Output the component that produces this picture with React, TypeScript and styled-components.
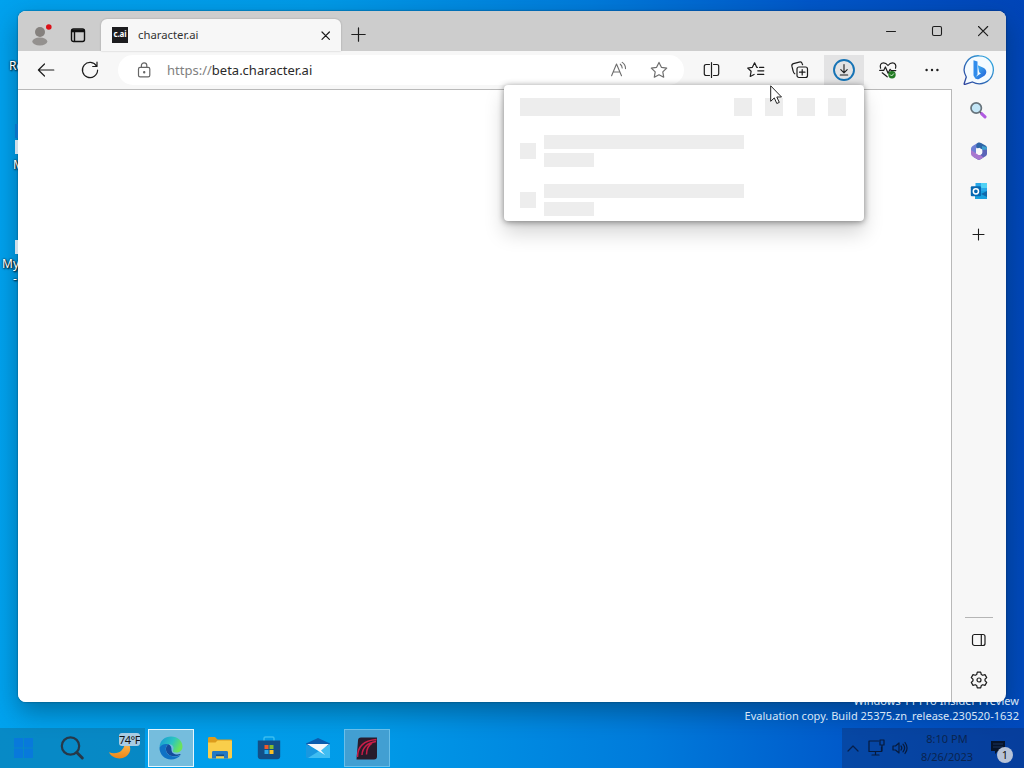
import React from "react";
import styled, { createGlobalStyle } from "styled-components";

const GlobalStyle = createGlobalStyle`
  * {
    box-sizing: border-box;
  }

  body {
    margin: 0;
    overflow: hidden;
    font-family: "Noto Sans", "Open Sans", sans-serif;
    cursor: default;
  }

  svg {
    display: block;
    flex: none;
    overflow: visible;
  }
`;

const StyledDesktop = styled.div`
  position: relative;
  width: 1024px;
  height: 768px;
  overflow: hidden;
  display: flex;
  flex-direction: column;
  justify-content: flex-end;
  background: linear-gradient(86deg, #00a3ef 0%, #009be8 34%, #007bdb 60%, #0057c9 80%, #0045b8 100%);
`;

const StyledShortcut = styled.div<{ $left: number; $top: number }>`
  position: absolute;
  left: ${(p) => p.$left}px;
  top: ${(p) => p.$top}px;
  font-size: 12px;
  line-height: 14px;
  white-space: pre;
  color: #fff;
  text-shadow: 1px 1px 2px #000, 0 0 2px #000;
`;

const StyledShortcutIcon = styled.div<{ $top: number; $color: string }>`
  position: absolute;
  left: 15px;
  top: ${(p) => p.$top}px;
  width: 30px;
  height: 14px;
  background: ${(p) => p.$color};
`;

const StyledWatermark = styled.div`
  position: relative;
  padding-right: 5px;
  margin-bottom: 5px;
  text-align: right;
  font-size: 11px;
  line-height: 15px;
  letter-spacing: 0.02px;
  color: #d9e6f5;
`;

const StyledWindow = styled.div`
  position: absolute;
  left: 18px;
  top: 11px;
  width: 988px;
  height: 691px;
  display: flex;
  flex-direction: column;
  overflow: hidden;
  border-radius: 8px;
  background: #f7f7f7;
`;

const StyledWindowShadow = styled.div`
  position: absolute;
  left: 18px;
  top: 11px;
  width: 988px;
  height: 691px;
  border-radius: 8px;
  box-shadow: 0 10px 26px rgba(0, 40, 60, 0.42), 0 0 2px rgba(0, 0, 0, 0.5);
`;

const StyledTitleBar = styled.header`
  height: 40px;
  flex: none;
  display: flex;
  padding-left: 2px;
  background: #cdcdcd;
`;

const StyledTitleButton = styled.div<{ $width: number }>`
  width: ${(p) => p.$width}px;
  height: 40px;
  display: flex;
  align-items: center;
  justify-content: center;
`;

const StyledProfile = styled(StyledTitleButton)`
  padding-top: 8px;
`;

const StyledTabActions = styled(StyledTitleButton)`
  padding: 7px 5px 0 0;
`;

const StyledTab = styled.div`
  width: 240px;
  height: 32px;
  margin-top: 8px;
  padding: 0 10px 0 11px;
  display: flex;
  align-items: center;
  border-radius: 6px 6px 0 0;
  background: #f7f7f7;
  box-shadow: 0 0 2px rgba(0, 0, 0, 0.25);
`;

const StyledNewTab = styled(StyledTitleButton)`
  padding-top: 7px;
`;

const StyledFavicon = styled.div`
  width: 16px;
  height: 16px;
  background: #1c1c1f;
  color: #fff;
  font-size: 8px;
  font-weight: 700;
  line-height: 14px;
  letter-spacing: -0.2px;
  text-align: center;
`;

const StyledTabTitle = styled.span`
  flex: 1;
  padding-left: 10px;
  font-size: 11.3px;
  line-height: 16px;
  color: #333;
`;

const StyledControls = styled.div`
  display: flex;
  margin-left: auto;
`;

const StyledBody = styled.div`
  flex: 1;
  min-height: 0;
  display: flex;
`;

const StyledMain = styled.main`
  width: 934px;
  display: flex;
  flex-direction: column;
`;

const StyledToolbar = styled.div`
  height: 39px;
  flex: none;
  display: flex;
  align-items: flex-start;
  gap: 4px;
  padding: 4px 0 0 8px;
  border-bottom: 1px solid #b9b9b9;
`;

const StyledToolButton = styled.div<{ $active?: boolean }>`
  width: 40px;
  height: 30px;
  flex: none;
  display: flex;
  align-items: center;
  justify-content: center;
  background: ${(p) => (p.$active ? "#e3e3e4" : "transparent")};
`;

const StyledAddress = styled.div`
  width: 566px;
  height: 30px;
  margin: 0 4px;
  padding: 0 16px 0 18px;
  display: flex;
  align-items: center;
  border-radius: 15px;
  background: #fff;
`;

const StyledUrl = styled.span`
  flex: 1;
  padding-left: 15px;
  font-size: 13px;
  line-height: 18px;
  color: #2a2a2a;

  em {
    font-style: normal;
    color: #808080;
  }
`;

const StyledAddressIcons = styled.div`
  display: flex;
  align-items: center;
  gap: 22px;
`;

const StyledPage = styled.div`
  flex: 1;
  border-right: 1px solid #b9b9b9;
  background: #fff;
`;

const StyledSidebar = styled.aside`
  flex: 1;
  display: flex;
  flex-direction: column;
  align-items: center;
  padding-bottom: 2px;
`;

const StyledSideItem = styled.div<{ $height?: number }>`
  height: ${(p) => p.$height || 40}px;
  display: flex;
  align-items: center;
  justify-content: center;
`;

const StyledDivider = styled.div`
  width: 28px;
  height: 1px;
  margin: auto 0 2px;
  background: #b5b5b5;
`;

const StyledPopup = styled.section`
  position: absolute;
  left: 486px;
  top: 74px;
  width: 360px;
  height: 136px;
  padding: 13px 18px 0 16px;
  border-radius: 4px;
  background: #fff;
  box-shadow: 0 12px 20px rgba(0, 0, 0, 0.17), 0 1px 6px rgba(0, 0, 0, 0.45);
`;

const StyledPopupHead = styled.div`
  display: flex;
  justify-content: space-between;
  margin-bottom: 19px;
`;

const StyledPopupActions = styled.div`
  display: flex;
  gap: 13.3px;
`;

const StyledPopupRow = styled.div`
  display: flex;
  align-items: center;
  gap: 8px;
  margin-bottom: 17px;
`;

const StyledLines = styled.div`
  display: flex;
  flex-direction: column;
  gap: 4px;
`;

const StyledBone = styled.div<{ $width: number; $height: number }>`
  width: ${(p) => p.$width}px;
  height: ${(p) => p.$height}px;
  background: #ededed;
`;

const StyledCursor = styled.div`
  position: absolute;
  left: 770px;
  top: 85px;
`;

const StyledTaskbar = styled.footer`
  position: relative;
  height: 40px;
  display: flex;
  justify-content: space-between;
`;

const StyledPinned = styled.div`
  display: flex;
`;

const StyledTaskGroup = styled.div<{ $tinted?: boolean }>`
  display: flex;
  align-items: center;
  gap: 3px;
  padding-left: ${(p) => (p.$tinted ? 0 : 3)}px;
  padding-right: ${(p) => (p.$tinted ? 1 : 0)}px;
  background: ${(p) => (p.$tinted ? "rgba(20, 90, 120, 0.34)" : "transparent")};
`;

const StyledTask = styled.div<{ $state?: "active" | "open" }>`
  position: relative;
  width: 46px;
  height: 38px;
  display: flex;
  align-items: center;
  justify-content: center;
  border: ${(p) => (p.$state ? "1px solid" : "none")};
  border-color: ${(p) => (p.$state === "active" ? "#e6f6fd" : "#69bfea")};
  background: ${(p) =>
    p.$state === "active" ? "#75bddd" : p.$state === "open" ? "#429fd2" : "transparent"};
`;

const StyledTemp = styled.span`
  position: absolute;
  left: 21px;
  top: 4px;
  width: 21px;
  height: 13px;
  border-radius: 3px;
  background: #a9cce3;
  color: #111;
  font-size: 11px;
  line-height: 13px;
  letter-spacing: -0.5px;
  white-space: nowrap;
  overflow: hidden;
`;

const StyledTray = styled.div`
  width: 182px;
  display: flex;
  align-items: center;
  padding-left: 5px;
  background: rgba(15, 45, 105, 0.38);
`;

const StyledTrayIcons = styled.div`
  display: flex;
  align-items: center;
  gap: 8px;
`;

const StyledClock = styled.div`
  width: 62px;
  margin-left: 7px;
  text-align: center;
  font-size: 11px;
  line-height: 18px;
  color: #0a2450;
`;

const StyledNotice = styled.div`
  position: relative;
  margin-left: 12px;
`;

const StyledBadge = styled.span`
  position: absolute;
  left: 7px;
  top: 7px;
  width: 16px;
  height: 16px;
  border-radius: 50%;
  background: #b7c3d8;
  color: #111;
  font-size: 11px;
  line-height: 16px;
  text-align: center;
`;

function Icon({
  size = 18,
  color = "#1d1d1d",
  width = 1.2,
  children,
}: {
  size?: number;
  color?: string;
  width?: number;
  children: React.ReactNode;
}) {
  return (
    <svg
      width={size}
      height={size}
      viewBox={`0 0 ${size} ${size}`}
      fill="none"
      stroke={color}
      strokeWidth={width}
      strokeLinecap="round"
      strokeLinejoin="round"
    >
      {children}
    </svg>
  );
}

function TitleBar() {
  return (
    <StyledTitleBar>
      <StyledProfile $width={39}>
        <svg width="22" height="24" viewBox="0 0 22 24">
          <circle cx="11" cy="9" r="5" fill="#85817e" />
          <ellipse cx="10.8" cy="18.5" rx="7.5" ry="4" fill="#94918f" />
          <circle cx="19.8" cy="4" r="2.8" fill="#dc1018" />
        </svg>
      </StyledProfile>
      <StyledTabActions $width={42}>
        <Icon size={16} width={1.4} color="#111">
          <rect x="1.5" y="2" width="13" height="12.5" rx="2" />
          <path d="M2 3.2h12M2 4.6h12M4.5 5v9" />
        </Icon>
      </StyledTabActions>
      <StyledTab>
        <StyledFavicon>c.ai</StyledFavicon>
        <StyledTabTitle>character.ai</StyledTabTitle>
        <Icon size={11}>
          <path d="M2 2l7.400 7.400M9.400 2L2 9.400" />
        </Icon>
      </StyledTab>
      <StyledNewTab $width={35}>
        <Icon size={15}>
          <path d="M7.500.8v13.400M.8 7.500h13.400" />
        </Icon>
      </StyledNewTab>
      <StyledControls>
        <StyledTitleButton $width={46}>
          <Icon size={10} width={1}>
            <path d="M.5 5.500h9" />
          </Icon>
        </StyledTitleButton>
        <StyledTitleButton $width={46}>
          <Icon size={10} width={1.1}>
            <rect x=".5" y=".5" width="9" height="9" rx="1.5" />
          </Icon>
        </StyledTitleButton>
        <StyledTitleButton $width={46}>
          <Icon size={10} width={1.1}>
            <path d="M.5.5l9.200 9.200M9.700.5L.5 9.700" />
          </Icon>
        </StyledTitleButton>
      </StyledControls>
    </StyledTitleBar>
  );
}

function Toolbar() {
  return (
    <StyledToolbar>
      <StyledToolButton>
        <Icon>
          <path d="M16.8 9H1.500M7.500 3L1.400 9l6.100 6" />
        </Icon>
      </StyledToolButton>
      <StyledToolButton>
        <Icon>
          <path d="M15.600 5.200A7.600 7.600 0 1 0 16.600 9M16 1.200v4.300h-4.300" />
        </Icon>
      </StyledToolButton>
      <StyledAddress>
        <Icon size={16} color="#666">
          <rect x="2.500" y="5.300" width="11.300" height="9.600" rx="1.600" />
          <path d="M5.400 5.200V3.600a2.700 2.700 0 0 1 5.400 0v1.600" />
          <circle cx="8.200" cy="10.200" r=".6" fill="#666" />
        </Icon>
        <StyledUrl>
          <em>https://</em>beta.character.ai
        </StyledUrl>
        <StyledAddressIcons>
          <Icon color="#6e6e6e" width={1.1}>
            <path d="M1.600 14.800L6.500 3l5 11.800M3.300 11h6.500M10.300 3.200c1.200.9 1.800 2.100 1.900 3.800M12.200 1.400c2 1.300 3.300 3.500 3.300 6.200" />
          </Icon>
          <Icon color="#6e6e6e">
            <path d="M9 1.400l2.400 4.900 5.300.8-3.900 3.800.9 5.300L9 13.700l-4.700 2.500.9-5.300-3.900-3.800 5.300-.8z" />
          </Icon>
        </StyledAddressIcons>
      </StyledAddress>
      <StyledToolButton>
        <Icon>
          <path d="M6.500 3.500H3A1.700 1.700 0 0 0 1.300 5.200v7.600A1.700 1.700 0 0 0 3 14.500h3.500M10.500 3.500H14a1.700 1.700 0 0 1 1.700 1.700v7.600a1.700 1.700 0 0 1-1.700 1.700h-3.500M8.500 1.500v15" />
        </Icon>
      </StyledToolButton>
      <StyledToolButton>
        <Icon>
          <path d="M10.500 6.300H9.700L7.600 1.800 5.400 6.300l-4.700.7 3.400 3.300-.9 5.200 3.900-2M16.800 6.300h-4.300M16.800 9.800h-6M16.800 13.300h-6.300" />
        </Icon>
      </StyledToolButton>
      <StyledToolButton>
        <Icon>
          <rect x="6" y="6" width="10.500" height="10.500" rx="2" />
          <path d="M11.200 8.500v5.500M8.500 11.200H14M3.800 12.800C2.600 12.300 2.400 11.500 2.100 10L.9 5.200C.6 3.800 1 3 2.400 2.600l5.800-1.500c1.600-.4 2.600.2 3 1.600l.4 1" />
        </Icon>
      </StyledToolButton>
      <StyledToolButton $active>
        <Icon size={22} width={1.1}>
          <circle cx="11" cy="11" r="10" stroke="#1673b5" strokeWidth="1.900" />
          <path d="M11 5.500v8.200M7.800 10.700l3.200 3.200 3.200-3.200M7.300 16h7.400" />
        </Icon>
      </StyledToolButton>
      <StyledToolButton>
        <Icon width={1.2}>
          <path d="M1.600 7.200C.5 3.800 2.200 1.800 4.500 1.800c2 0 3.200 1 4.500 2.700 1.300-1.700 2.600-2.700 4.500-2.700 2.500 0 4.100 2.400 3 5.400M.7 9.400h4L6.400 6l2.700 6.300 2-4 1.200 1.300h4.500M3.200 11.800l5 4" />
          <circle cx="13" cy="13.800" r="3.700" fill="#237b24" stroke="none" />
          <path d="M11.400 13.800l1.200 1.200 2-2.200" stroke="#d6f0d5" strokeWidth="1" />
        </Icon>
      </StyledToolButton>
      <StyledToolButton>
        <svg width="16" height="16" viewBox="0 0 16 16" fill="#1d1d1d">
          <circle cx="2.600" cy="8" r="1.200" />
          <circle cx="8" cy="8" r="1.200" />
          <circle cx="13.400" cy="8" r="1.200" />
        </svg>
      </StyledToolButton>
    </StyledToolbar>
  );
}

function BingIcon() {
  return (
    <svg width="32" height="32" viewBox="0 0 32 32">
      <defs>
        <linearGradient id="bingRing" x1="1" y1="0" x2="0" y2="1">
          <stop offset="0" stopColor="#35b4e8" />
          <stop offset="1" stopColor="#2b3f9a" />
        </linearGradient>
        <linearGradient id="bingB" x1="0" y1="0" x2="1" y2="1">
          <stop offset="0" stopColor="#45bdf3" />
          <stop offset="1" stopColor="#1f5bd8" />
        </linearGradient>
      </defs>
      <path
        d="M16.500.8A14 14 0 1 1 9.500 27L2 29.400c-.7.2-1-.3-.8-.9l2.100-6.500A14 14 0 0 1 16.500.8z"
        fill="#f4fbff"
        stroke="url(#bingRing)"
        strokeWidth="1.300"
      />
      <path d="M10.500 5.200l4 1.400v13l-2 3c-1.200-.4-2-1.400-2-2.600z" fill="#2f8cec" />
      <path d="M14.800 10.300l5.600 2.400c3.600 1.700 3.800 5.700 1 8l-5.100 3.100c-1.900 1.100-4 .2-4.800-1.200l6.400-4-1.700-1.300z" fill="url(#bingB)" />
    </svg>
  );
}

function Sidebar() {
  return (
    <StyledSidebar>
      <StyledSideItem>
        <BingIcon />
      </StyledSideItem>
      <StyledSideItem>
        <svg width="18" height="18" viewBox="0 0 18 18">
          <path d="M10 10l2 2" stroke="#555" strokeWidth="2" />
          <path d="M11.800 11.800l3.200 3" stroke="#b05ae0" strokeWidth="3.200" strokeLinecap="round" />
          <circle cx="6.200" cy="6" r="5.200" fill="#c3e6f7" stroke="#67737b" strokeWidth="1.700" />
        </svg>
      </StyledSideItem>
      <StyledSideItem>
        <svg width="18" height="18" viewBox="0 0 18 18">
          <path d="M8 .8L3 3.700C1.500 4.600 1 5.800 1 7.200v4.500L6 11V7.500c0-1 .4-1.800 1.300-2.300L12 2z" fill="#6f80d6" />
          <path d="M8 .8c1.200-.6 2-.5 3 .1l4.500 2.700c1 .6 1.500 1.700 1.500 3v4.500l-4.800-3.200-5.400-1.900C5.800 4 6 1.800 8 .8z" fill="#2f66a7" />
          <path d="M12 4l4.500 1c.4.500.5 1 .5 1.600v4.500l-4.800-3.200z" fill="#3fa0cf" />
          <path d="M17 7.500v4c0 1.300-.4 2.100-1.500 2.800l-4.800 2.900c-1.200.7-2.300.7-3.500 0L3 14.700l7.200-1.600c1.400-.6 2-1.400 2-3V8z" fill="#5a63b8" />
          <path d="M1 8v3.800c0 1.200.6 2.100 1.700 2.800l4.300 2.500c1.200.7 2.500.7 3.700 0l2.800-1.700-3-2.400H8.600L5.600 11z" fill="#a877cf" />
          <path d="M9.200 5.800l3 1.800v3.600L9.200 13l-3.200-1.900V7.600z" fill="#f8f8fb" />
        </svg>
      </StyledSideItem>
      <StyledSideItem>
        <svg width="18" height="18" viewBox="0 0 18 18">
          <rect x="5.500" y="1" width="11.500" height="11" fill="#29a8e8" />
          <rect x="11" y="1" width="6" height="5" fill="#50d2f5" />
          <path d="M5 9h12v8H5z" fill="#1aa0dd" />
          <path d="M17 9v6l-6-3z" fill="#1169ab" />
          <rect x=".8" y="4.300" width="10.200" height="10" rx="1" fill="#0868b1" />
          <circle cx="5.900" cy="9.300" r="2.600" fill="none" stroke="#fff" strokeWidth="1.500" />
        </svg>
      </StyledSideItem>
      <StyledSideItem $height={47}>
        <Icon size={12} width={1.1}>
          <path d="M5.500 0v11M0 5.500h11" />
        </Icon>
      </StyledSideItem>
      <StyledDivider />
      <StyledSideItem>
        <Icon size={16} width={1.2}>
          <rect x="1.500" y="2.500" width="12.500" height="11" rx="2" />
          <path d="M10.300 2.500v11" />
        </Icon>
      </StyledSideItem>
      <StyledSideItem>
        <Icon width={1.2}>
          <path d="M7.300 1.200h3.400l.6 2.300 1.400.8 2.300-.7 1.700 3-1.700 1.600v1.600l1.700 1.600-1.700 3-2.300-.7-1.400.8-.6 2.300H7.300l-.6-2.300-1.400-.8-2.300.7-1.700-3L3 9.800V8.200L1.300 6.600l1.700-3 2.300.7 1.400-.8z" />
          <circle cx="9" cy="9" r="2" />
        </Icon>
      </StyledSideItem>
    </StyledSidebar>
  );
}

function DownloadsPopup() {
  return (
    <StyledPopup>
      <StyledPopupHead>
        <StyledBone $width={100} $height={18} />
        <StyledPopupActions>
          {[0, 1, 2, 3].map((n) => (
            <StyledBone key={n} $width={18} $height={18} />
          ))}
        </StyledPopupActions>
      </StyledPopupHead>
      {[0, 1].map((n) => (
        <StyledPopupRow key={n}>
          <StyledBone $width={16} $height={16} />
          <StyledLines>
            <StyledBone $width={200} $height={14} />
            <StyledBone $width={50} $height={14} />
          </StyledLines>
        </StyledPopupRow>
      ))}
    </StyledPopup>
  );
}

function EdgeIcon() {
  return (
    <svg width="24" height="24" viewBox="0 0 24 24">
      <defs>
        <linearGradient id="edgeTop" x1="0" y1="0" x2="1" y2="0.4">
          <stop offset="0" stopColor="#1595d8" />
          <stop offset="0.6" stopColor="#2cc5c0" />
          <stop offset="1" stopColor="#6be35a" />
        </linearGradient>
      </defs>
      <path d="M.5 11C1 4.500 6 .5 12 .5c7 0 11.500 4.800 11.500 10 0 4-3 6-6.300 6-2.500 0-4-.8-3.200-2.200 1.600-3-.5-6-4-6C5.500 8.300 2 9.500.5 11z" fill="url(#edgeTop)" />
      <path d="M.5 11.500C2 8.700 5.500 7.300 9.500 8.300 6.500 10 6 13.500 8 17c2.300 3.600 8 4.500 13.500 2.300C19.500 22 16 23.500 12 23.500 5.500 23.500.2 18 .5 11.500z" fill="#0f72c5" />
      <path d="M9.500 8.300c-2.600 1.600-3.400 5-1.500 8.400 2.300 3.800 8 4.600 13.200 2.200.6-.3.300-1-.3-.8-4 1.200-8.400-.4-8.400-4.400 0-2.200-.7-4.300-3-5.400z" fill="#144c9c" />
    </svg>
  );
}

function Taskbar() {
  return (
    <StyledTaskbar>
      <StyledPinned>
        <StyledTaskGroup $tinted>
          <StyledTask>
            <svg width="20" height="20" viewBox="0 0 20 20" fill="#0879db">
              <path d="M1 0h9v9.500H1zM11 0h9v9.500h-9zM1 10.500h9V20H1zM11 10.500h9V20h-9z" />
            </svg>
          </StyledTask>
          <StyledTask>
            <svg width="24" height="24" viewBox="0 0 24 24" fill="none" stroke="#263849">
              <circle cx="10.500" cy="10" r="8.700" strokeWidth="2.200" />
              <path d="M16.800 16.500l5.500 5.500" strokeWidth="3" strokeLinecap="round" />
            </svg>
          </StyledTask>
          <StyledTask>
            <svg width="26" height="26" viewBox="0 0 26 26">
              <defs>
                <linearGradient id="moon" x1="0" y1="0" x2="0" y2="1">
                  <stop offset="0" stopColor="#ffc457" />
                  <stop offset="1" stopColor="#ee8516" />
                </linearGradient>
              </defs>
              <path d="M16.500 5c7.500 4.500 7.500 12.500 1.500 16.500-5.500 3.600-14 2-17-4.200 5 2 10 .7 12.500-1.800 3-3 3.500-6 3-10.500z" fill="url(#moon)" />
            </svg>
            <StyledTemp>74°F</StyledTemp>
          </StyledTask>
        </StyledTaskGroup>
        <StyledTaskGroup>
          <StyledTask $state="active">
            <EdgeIcon />
          </StyledTask>
          <StyledTask>
            <svg width="26" height="24" viewBox="0 0 26 24">
              <path d="M1 2.500C1 1.700 1.500 1 2.300 1H8l2.500 2.500H24c.6 0 1 .5 1 1V8H1z" fill="#dc9c1c" />
              <path d="M1 6.500h7.500l2-2H24c.6 0 1 .5 1 1v15.800c0 .7-.5 1.200-1.200 1.200H2.200c-.7 0-1.200-.5-1.200-1.200z" fill="#f9ce4b" />
              <path d="M5 22.500v-6c0-.8.6-1.400 1.400-1.400h13.200c.8 0 1.400.6 1.400 1.400v6h-4v-2.300H9v2.300z" fill="#2379c3" />
              <path d="M9 18.500h8V20H9z" fill="#164b84" />
            </svg>
          </StyledTask>
          <StyledTask>
            <svg width="24" height="24" viewBox="0 0 24 24">
              <path d="M7 5V2.500C7 1.700 7.600 1 8.500 1h7c.9 0 1.500.7 1.500 1.500V5" fill="none" stroke="#39bdf0" strokeWidth="1.500" />
              <path d="M.8 4.500h22.400v15.700c0 1.800-1.200 3-3 3H3.800c-1.800 0-3-1.200-3-3z" fill="#124f87" />
              <path d="M7.500 9h4v4h-4z" fill="#ee5a2a" />
              <path d="M12.500 9h4v4h-4z" fill="#83bd2c" />
              <path d="M7.500 14h4v4h-4z" fill="#29a9e8" />
              <path d="M12.500 14h4v4h-4z" fill="#fbc125" />
            </svg>
          </StyledTask>
          <StyledTask>
            <svg width="24" height="20" viewBox="0 0 24 20">
              <path d="M0 5.500L12 0l12 5.500V8H0z" fill="#0a5cae" />
              <path d="M0 6l13 8 11 6H1.500C.6 20 0 19.300 0 18.500z" fill="#1998e0" />
              <path d="M24 6v14H2l11-7z" fill="#3fbdf2" />
              <path d="M1 6h22l-8 6.500 4 4.500z" fill="#f2f8fc" />
            </svg>
          </StyledTask>
          <StyledTask $state="open">
            <svg width="22" height="23" viewBox="0 0 22 23">
              <path d="M2 3.500C2 1.500 3 .5 5 .5h16v19c0 2-1 3-3 3H.5z" fill="#271c2c" />
              <path d="M1.500 20C1.500 9 8 3.500 20.500 2.500M6 18C6.500 10 11 6 20 4.500M10.500 17.500c0-6 1.500-9 5.500-11.500" fill="none" stroke="#c91d48" strokeWidth="1.500" />
            </svg>
          </StyledTask>
        </StyledTaskGroup>
      </StyledPinned>
      <StyledTray>
        <StyledTrayIcons>
          <Icon size={12} color="#061f4b">
            <path d="M1 9l5-5 5 5" />
          </Icon>
          <Icon size={18} color="#061a3d">
            <path d="M11.500 2H2v10.500h12.500V8M8.500 12.500V16M5 16h7" />
            <path d="M13 1h4v5h-4zM15 6v6" />
          </Icon>
          <Icon size={16} color="#061a3d">
            <path d="M0 6h2.500L6 3v10l-3.500-3H0zM8 6c1 1.200 1 2.800 0 4M10 4.200c2 2.300 2 5.300 0 7.600M12 2.500c2.500 3.300 2.500 7.700 0 11" />
          </Icon>
        </StyledTrayIcons>
        <StyledClock>
          8:10 PM
          <br />
          8/26/2023
        </StyledClock>
        <StyledNotice>
          <svg width="16" height="16" viewBox="0 0 16 16">
            <path d="M1 1h14v10H8l-3 3v-3H1z" fill="#061329" />
            <path d="M3 4h10M3 7h10" stroke="#254275" strokeWidth=".7" />
          </svg>
          <StyledBadge>1</StyledBadge>
        </StyledNotice>
      </StyledTray>
    </StyledTaskbar>
  );
}

export default function App() {
  return (
    <StyledDesktop>
      <GlobalStyle />
      <StyledWindowShadow />
      <StyledShortcut $left={9} $top={59}>Re</StyledShortcut>
      <StyledShortcutIcon $top={124} $color="#0a72c4" />
      <StyledShortcutIcon $top={140} $color="#cfdde8" />
      <StyledShortcut $left={13} $top={158}>M</StyledShortcut>
      <StyledShortcutIcon $top={240} $color="#cfdde8" />
      <StyledShortcut $left={2} $top={257}>My</StyledShortcut>
      <StyledShortcut $left={13} $top={272}>-</StyledShortcut>
      <StyledWatermark>
        Windows 11 Pro Insider Preview
        <br />
        Evaluation copy. Build 25375.zn_release.230520-1632
      </StyledWatermark>
      <Taskbar />
      <StyledWindow>
        <TitleBar />
        <StyledBody>
          <StyledMain>
            <Toolbar />
            <StyledPage />
          </StyledMain>
          <Sidebar />
        </StyledBody>
        <DownloadsPopup />
      </StyledWindow>
      <StyledCursor>
        <svg width="12" height="20" viewBox="0 0 12 20">
          <path d="M.7.800v15.500l3.600-3.400 2.500 5.600 2.500-1.100-2.500-5.400h4.700z" fill="#fff" stroke="#222" strokeWidth="1" />
        </svg>
      </StyledCursor>
    </StyledDesktop>
  );
}
